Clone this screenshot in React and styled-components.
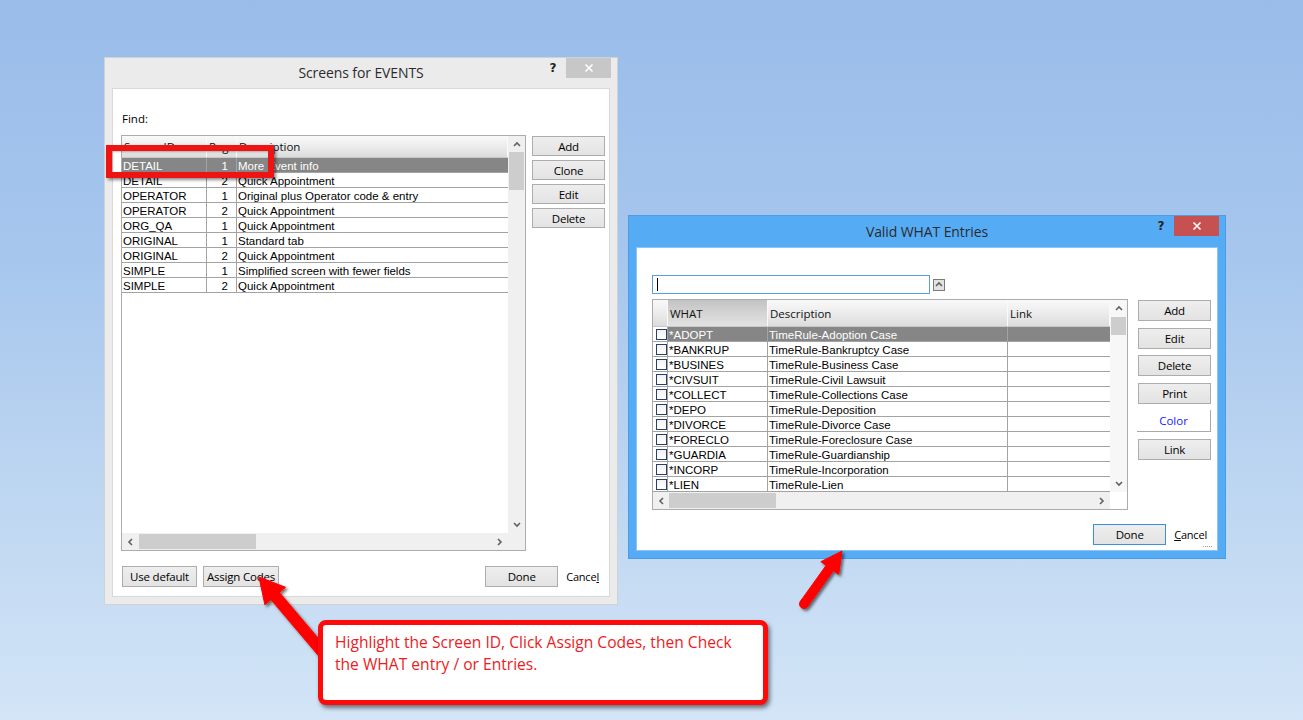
import React from 'react';
import styled, { createGlobalStyle } from 'styled-components';

const GlobalStyle = createGlobalStyle`
  html, body { margin: 0; padding: 0; }
  body {
    width: 1303px;
    height: 720px;
    overflow: hidden;
    background: linear-gradient(180deg, #99bce9 0%, #a6c6ed 35%, #c2d9f2 75%, #d3e5f7 100%);
    font-family: "Liberation Sans", Arial, sans-serif;
  }
  * { box-sizing: border-box; }
`;

const Desktop = styled.div`
  position: relative;
  width: 1303px;
  height: 720px;
`;

const Window = styled.div`
  position: absolute;
  left: ${p => p.$x}px;
  top: ${p => p.$y}px;
  width: ${p => p.$w}px;
  height: ${p => p.$h}px;
  background: ${p => p.$frame};
  border: 1px solid ${p => p.$edge};
  display: flex;
  flex-direction: column;
`;

const TitleBar = styled.div`
  height: ${p => p.$h}px;
  flex: none;
  display: grid;
  grid-template-columns: 1fr auto 1fr;
  align-items: start;
`;

const Title = styled.div`
  grid-column: 2;
  font-family: "Open Sans", "Noto Sans", sans-serif;
  font-size: 14px;
  color: #2b2b2b;
  line-height: 18px;
  padding-top: ${p => p.$pt}px;
  letter-spacing: -0.1px;
`;

const Controls = styled.div`
  grid-column: 3;
  justify-self: end;
  display: flex;
  align-items: flex-start;
  padding-right: 6px;
`;

const Help = styled.div`
  font-family: "DejaVu Sans", sans-serif;
  font-weight: bold;
  font-size: 12px;
  color: #222;
  width: 14px;
  margin-top: 3px;
  margin-right: 6px;
  text-align: center;
`;

const CloseBtn = styled.div`
  width: 45px;
  height: 20px;
  background: ${p => p.$bg};
  color: #fff;
  display: flex;
  align-items: center;
  justify-content: center;
`;

const Client = styled.div`
  flex: 1;
  margin: 0 7px 7px 7px;
  background: #fff;
  border: 1px solid ${p => p.$edge};
  display: flex;
  flex-direction: column;
  padding: ${p => p.$pad};
`;

const FindLabel = styled.div`
  font-family: "Open Sans", "Noto Sans", sans-serif;
  font-size: 11.5px;
  line-height: 16px;
  height: 16px;
  color: #000;
  margin: 0 0 8px 1px;
`;

const MainRow = styled.div`
  display: flex;
  gap: ${p => p.$gap}px;
  align-items: flex-start;
`;

const TableFrame = styled.div`
  width: ${p => p.$w}px;
  height: ${p => p.$h}px;
  border: 1px solid #acacac;
  background: #fff;
  display: grid;
  grid-template-columns: 1fr 17px;
  grid-template-rows: 1fr 17px;
  overflow: hidden;
`;

const Body = styled.div`
  overflow: hidden;
  min-width: 0;
`;

const HeaderRow = styled.div`
  display: grid;
  grid-template-columns: ${p => p.$cols};
  height: ${p => p.$h}px;
  background: linear-gradient(180deg, #f9f9f9 0%, #ececec 50%, #dcdcdc 100%);
  border-bottom: 1px solid #c8c8c8;
`;

const HeaderCell = styled.div`
  font-family: "Open Sans", "Noto Sans", sans-serif;
  font-size: 11.5px;
  color: #111;
  padding-left: 2px;
  display: flex;
  align-items: center;
  white-space: nowrap;
  overflow: hidden;
  border-right: 1px solid #fafafa;
  background: ${p => (p.$sorted ? 'linear-gradient(180deg, #c2c2c2 0%, #d4d4d4 50%, #e2e2e2 100%)' : 'transparent')};
`;

const Row = styled.div`
  display: grid;
  grid-template-columns: ${p => p.$cols};
  height: 15px;
  background: ${p => (p.$sel ? '#868686' : '#fff')};
  color: ${p => (p.$sel ? '#fff' : '#000')};
  border-bottom: 1px solid #a3a3a3;
`;

const Cell = styled.div`
  font-size: 11.5px;
  line-height: 14px;
  white-space: nowrap;
  overflow: hidden;
  padding: ${p => (p.$right ? '1px 8px 0 0' : '1px 0 0 1px')};
  border-right: ${p => (p.$last ? 'none' : '1px solid #a3a3a3')};
  background: ${p => (p.$plain ? '#fff' : 'transparent')};
  display: flex;
  align-items: center;
  justify-content: ${p => (p.$right ? 'flex-end' : 'flex-start')};
`;

const CheckBox = styled.span`
  width: 11px;
  height: 11px;
  margin-left: 2px;
  margin-top: -1px;
  border: 1px solid #2a3f66;
  background: linear-gradient(180deg, #f2f2f2, #ffffff);
`;

const VScroll = styled.div`
  grid-row: 1;
  grid-column: 2;
  background: ${p => p.$bg};
  display: flex;
  flex-direction: column;
  align-items: center;
`;

const HScroll = styled.div`
  grid-row: 2;
  grid-column: 1;
  background: #f0f0f0;
  display: flex;
  align-items: center;
`;

const Corner = styled.div`
  grid-row: 2;
  grid-column: 2;
  background: ${p => p.$bg};
`;

const ArrowCell = styled.div`
  flex: none;
  width: ${p => p.$w}px;
  height: ${p => p.$h}px;
  display: flex;
  align-items: center;
  justify-content: center;
`;

const VThumb = styled.div`
  width: 15px;
  height: ${p => p.$h}px;
  background: #cdcdcd;
  flex: none;
`;

const HThumb = styled.div`
  height: 15px;
  width: ${p => p.$w}px;
  background: #cdcdcd;
  flex: none;
`;

const Spacer = styled.div`
  flex: 1;
`;

const ButtonCol = styled.div`
  display: flex;
  flex-direction: column;
  gap: ${p => p.$gap}px;
  padding-top: 1px;
`;

const Btn = styled.div`
  width: ${p => p.$w}px;
  height: ${p => p.$h}px;
  flex: none;
  border: 1px solid ${p => (p.$default ? '#3c8ee0' : '#adadad')};
  background: linear-gradient(180deg, #eeeeee, #e3e3e3);
  font-family: "Open Sans", "Noto Sans", sans-serif;
  font-size: 11.5px;
  color: #000;
  display: flex;
  align-items: center;
  justify-content: center;
  margin-left: ${p => p.$ml || 0}px;
  letter-spacing: -0.2px;
`;

const FlatBtn = styled.div`
  width: 74px;
  height: 22px;
  border-right: 1px solid #a8a8a8;
  border-bottom: 1px solid #a8a8a8;
  background: #fff;
  font-family: "Open Sans", "Noto Sans", sans-serif;
  font-size: 11.5px;
  color: #1a1aff;
  display: flex;
  align-items: center;
  justify-content: center;
  margin-left: -1px;
`;

const Footer = styled.div`
  display: flex;
  align-items: center;
  height: 21px;
  margin-top: ${p => p.$mt}px;
  padding-left: ${p => p.$pl}px;
  padding-right: ${p => p.$pr}px;
`;

const CancelLabel = styled.span`
  font-family: "Open Sans", "Noto Sans", sans-serif;
  font-size: 11px;
  color: #000;
  margin-left: 8px;
  letter-spacing: -0.2px;
  u { text-decoration: underline; text-underline-offset: 1px; }
`;

const InputRow = styled.div`
  display: flex;
  align-items: center;
  gap: 3px;
  height: 19px;
  margin-bottom: 5px;
`;

const TextInput = styled.div`
  width: 278px;
  height: 19px;
  border: 1px solid #5b9fe2;
  background: #fff;
  display: flex;
  align-items: center;
  padding-left: 4px;
`;

const Caret = styled.span`
  width: 1px;
  height: 13px;
  background: #000;
`;

const MiniBtn = styled.div`
  width: 12px;
  height: 12px;
  border: 1px solid #7a7a7a;
  background: #e2e2e2;
  display: flex;
  align-items: center;
  justify-content: center;
`;

const GripRow = styled.div`
  display: flex;
  justify-content: flex-end;
  padding-right: 5px;
  margin-top: 1px;
  gap: 1px;
`;

const GripDot = styled.span`
  width: 1px;
  height: 1px;
  background: #a0a0a0;
`;

const Highlight = styled.div`
  position: absolute;
  left: 106px;
  top: 145px;
  width: 168px;
  height: 33px;
  border: 6px solid #ee1414;
  box-shadow: 2px 2px 3px rgba(0, 0, 0, 0.45), inset 1px 1px 2px rgba(0, 0, 0, 0.25);
`;

const Overlay = styled.svg`
  position: absolute;
  left: 0;
  top: 0;
  pointer-events: none;
`;

const Callout = styled.div`
  position: absolute;
  left: 318px;
  top: 620px;
  width: 450px;
  height: 85px;
  border: 5px solid #ff0a0a;
  border-radius: 8px;
  background: #fff;
  box-shadow: 2px 3px 4px rgba(0, 0, 0, 0.5);
  padding: 6px 0 0 12px;
  font-family: "Open Sans", "Noto Sans", sans-serif;
  font-size: 15.6px;
  line-height: 22px;
  color: #ec1c24;
`;

const Chevron = ({ dir }) => {
  const paths = {
    up: 'M1 5 L4 2 L7 5',
    down: 'M1 2 L4 5 L7 2',
    left: 'M5 1 L2 4 L5 7',
    right: 'M2 1 L5 4 L2 7',
  };
  const horiz = dir === 'left' || dir === 'right';
  return (
    <svg width={horiz ? 7 : 8} height={horiz ? 8 : 7} viewBox={horiz ? '0 0 7 8' : '0 0 8 7'}>
      <path d={paths[dir]} fill="none" stroke="#606060" strokeWidth="1.6" />
    </svg>
  );
};

const CloseX = () => (
  <svg width="10" height="10" viewBox="0 0 10 10">
    <path d="M1.5 1.5 L8.5 8.5 M8.5 1.5 L1.5 8.5" stroke="#fff" strokeWidth="1.6" />
  </svg>
);

function arrowPoints(tip, tail, shaft, headW, headL) {
  const dx = tip[0] - tail[0];
  const dy = tip[1] - tail[1];
  const len = Math.hypot(dx, dy);
  const ux = dx / len;
  const uy = dy / len;
  const px = -uy;
  const py = ux;
  const bx = tip[0] - ux * headL;
  const by = tip[1] - uy * headL;
  const pts = [
    [tail[0] + (px * shaft) / 2, tail[1] + (py * shaft) / 2],
    [bx + (px * shaft) / 2, by + (py * shaft) / 2],
    [bx + (px * headW) / 2, by + (py * headW) / 2],
    tip,
    [bx - (px * headW) / 2, by - (py * headW) / 2],
    [bx - (px * shaft) / 2, by - (py * shaft) / 2],
    [tail[0] - (px * shaft) / 2, tail[1] - (py * shaft) / 2],
  ];
  return pts.map(p => p.map(v => v.toFixed(1)).join(',')).join(' ');
}

const screens = [
  ['DETAIL', '1', 'More Event info'],
  ['DETAIL', '2', 'Quick Appointment'],
  ['OPERATOR', '1', 'Original plus Operator code & entry'],
  ['OPERATOR', '2', 'Quick Appointment'],
  ['ORG_QA', '1', 'Quick Appointment'],
  ['ORIGINAL', '1', 'Standard tab'],
  ['ORIGINAL', '2', 'Quick Appointment'],
  ['SIMPLE', '1', 'Simplified screen with fewer fields'],
  ['SIMPLE', '2', 'Quick Appointment'],
];

const whats = [
  ['*ADOPT', 'TimeRule-Adoption Case'],
  ['*BANKRUP', 'TimeRule-Bankruptcy Case'],
  ['*BUSINES', 'TimeRule-Business Case'],
  ['*CIVSUIT', 'TimeRule-Civil Lawsuit'],
  ['*COLLECT', 'TimeRule-Collections Case'],
  ['*DEPO', 'TimeRule-Deposition'],
  ['*DIVORCE', 'TimeRule-Divorce Case'],
  ['*FORECLO', 'TimeRule-Foreclosure Case'],
  ['*GUARDIA', 'TimeRule-Guardianship'],
  ['*INCORP', 'TimeRule-Incorporation'],
  ['*LIEN', 'TimeRule-Lien'],
];

const LEFT_COLS = '85px 30px 1fr';
const RIGHT_COLS = '15px 100px 240px 1fr';

function ScreensWindow() {
  return (
    <Window $x={104} $y={57} $w={514} $h={548} $frame="#ebebeb" $edge="#d2d2d2">
      <TitleBar $h={30}>
        <Title $pt={6}>Screens for EVENTS</Title>
        <Controls>
          <Help>?</Help>
          <CloseBtn $bg="#c7c7c7"><CloseX /></CloseBtn>
        </Controls>
      </TitleBar>
      <Client $edge="#d9d9d9" $pad="22px 4px 9px 8px">
        <FindLabel>Find:</FindLabel>
        <MainRow $gap={6}>
          <TableFrame $w={405} $h={416}>
            <Body>
              <HeaderRow $cols={LEFT_COLS} $h={22}>
                <HeaderCell>Screen ID</HeaderCell>
                <HeaderCell>Page</HeaderCell>
                <HeaderCell>Description</HeaderCell>
              </HeaderRow>
              {screens.map((r, i) => (
                <Row key={i} $cols={LEFT_COLS} $sel={i === 0}>
                  <Cell>{r[0]}</Cell>
                  <Cell $right>{r[1]}</Cell>
                  <Cell $last>{r[2]}</Cell>
                </Row>
              ))}
            </Body>
            <VScroll $bg="#f0f0f0">
              <ArrowCell $w={17} $h={16}><Chevron dir="up" /></ArrowCell>
              <VThumb $h={38} />
              <Spacer />
              <ArrowCell $w={17} $h={17}><Chevron dir="down" /></ArrowCell>
            </VScroll>
            <HScroll>
              <ArrowCell $w={17} $h={17}><Chevron dir="left" /></ArrowCell>
              <HThumb $w={117} />
              <Spacer />
              <ArrowCell $w={17} $h={17}><Chevron dir="right" /></ArrowCell>
            </HScroll>
            <Corner $bg="#f0f0f0" />
          </TableFrame>
          <ButtonCol $gap={4}>
            <Btn $w={73} $h={20}>Add</Btn>
            <Btn $w={73} $h={20}>Clone</Btn>
            <Btn $w={73} $h={20}>Edit</Btn>
            <Btn $w={73} $h={20}>Delete</Btn>
          </ButtonCol>
        </MainRow>
        <Footer $mt={15} $pl={1} $pr={6}>
          <Btn $w={75} $h={21}>Use default</Btn>
          <Btn $w={76} $h={21} $ml={6}>Assign Codes</Btn>
          <Spacer />
          <Btn $w={73} $h={21}>Done</Btn>
          <CancelLabel>Cance<u>l</u></CancelLabel>
        </Footer>
      </Client>
    </Window>
  );
}

function WhatWindow() {
  return (
    <Window $x={628} $y={215} $w={598} $h={344} $frame="#56abf5" $edge="#4a9ce8">
      <TitleBar $h={31}>
        <Title $pt={7}>Valid WHAT Entries</Title>
        <Controls>
          <Help>?</Help>
          <CloseBtn $bg="#c75050"><CloseX /></CloseBtn>
        </Controls>
      </TitleBar>
      <Client $edge="#8cc4f5" $pad="27px 0 0 15px">
        <InputRow>
          <TextInput><Caret /></TextInput>
          <MiniBtn><Chevron dir="up" /></MiniBtn>
        </InputRow>
        <MainRow $gap={10}>
          <TableFrame $w={476} $h={211}>
            <Body>
              <HeaderRow $cols={RIGHT_COLS} $h={27}>
                <HeaderCell />
                <HeaderCell $sorted>WHAT</HeaderCell>
                <HeaderCell>Description</HeaderCell>
                <HeaderCell>Link</HeaderCell>
              </HeaderRow>
              {whats.map((r, i) => (
                <Row key={i} $cols={RIGHT_COLS} $sel={i === 0}>
                  <Cell $plain><CheckBox /></Cell>
                  <Cell>{r[0]}</Cell>
                  <Cell>{r[1]}</Cell>
                  <Cell $last />
                </Row>
              ))}
            </Body>
            <VScroll $bg="#f7f7f7">
              <ArrowCell $w={17} $h={17}><Chevron dir="up" /></ArrowCell>
              <VThumb $h={18} />
              <Spacer />
              <ArrowCell $w={17} $h={17}><Chevron dir="down" /></ArrowCell>
            </VScroll>
            <HScroll>
              <ArrowCell $w={16} $h={17}><Chevron dir="left" /></ArrowCell>
              <HThumb $w={107} />
              <Spacer />
              <ArrowCell $w={17} $h={17}><Chevron dir="right" /></ArrowCell>
            </HScroll>
            <Corner $bg="#ffffff" />
          </TableFrame>
          <ButtonCol $gap={6.5}>
            <Btn $w={73} $h={21}>Add</Btn>
            <Btn $w={73} $h={21}>Edit</Btn>
            <Btn $w={73} $h={21}>Delete</Btn>
            <Btn $w={73} $h={21}>Print</Btn>
            <FlatBtn>Color</FlatBtn>
            <Btn $w={73} $h={21}>Link</Btn>
          </ButtonCol>
        </MainRow>
        <Footer $mt={14} $pl={0} $pr={10}>
          <Spacer />
          <Btn $w={73} $h={21} $default>Done</Btn>
          <CancelLabel><u>C</u>ancel</CancelLabel>
        </Footer>
        <GripRow>
          <GripDot /><GripDot /><GripDot /><GripDot /><GripDot />
        </GripRow>
      </Client>
    </Window>
  );
}

export default function App() {
  return (
    <>
      <GlobalStyle />
      <Desktop>
        <ScreensWindow />
        <WhatWindow />
        <Highlight />
        <Overlay width="1303" height="720" viewBox="0 0 1303 720">
          <defs>
            <filter id="shadow" x="-20%" y="-20%" width="140%" height="140%">
              <feDropShadow dx="2" dy="2" stdDeviation="1.5" floodColor="#000" floodOpacity="0.55" />
            </filter>
          </defs>
          <g filter="url(#shadow)" fill="#ff0000" stroke="#ff0000" strokeWidth="1" strokeLinejoin="round">
            <polygon points={arrowPoints([259, 577], [326, 656], 11, 27, 25)} />
            <polygon points={arrowPoints([842, 551], [804, 604], 9, 22, 21)} />
            <circle cx="804" cy="604" r="4.5" />
          </g>
        </Overlay>
        <Callout>
          Highlight the Screen ID, Click Assign Codes, then Check<br />
          the WHAT entry / or Entries.
        </Callout>
      </Desktop>
    </>
  );
}
